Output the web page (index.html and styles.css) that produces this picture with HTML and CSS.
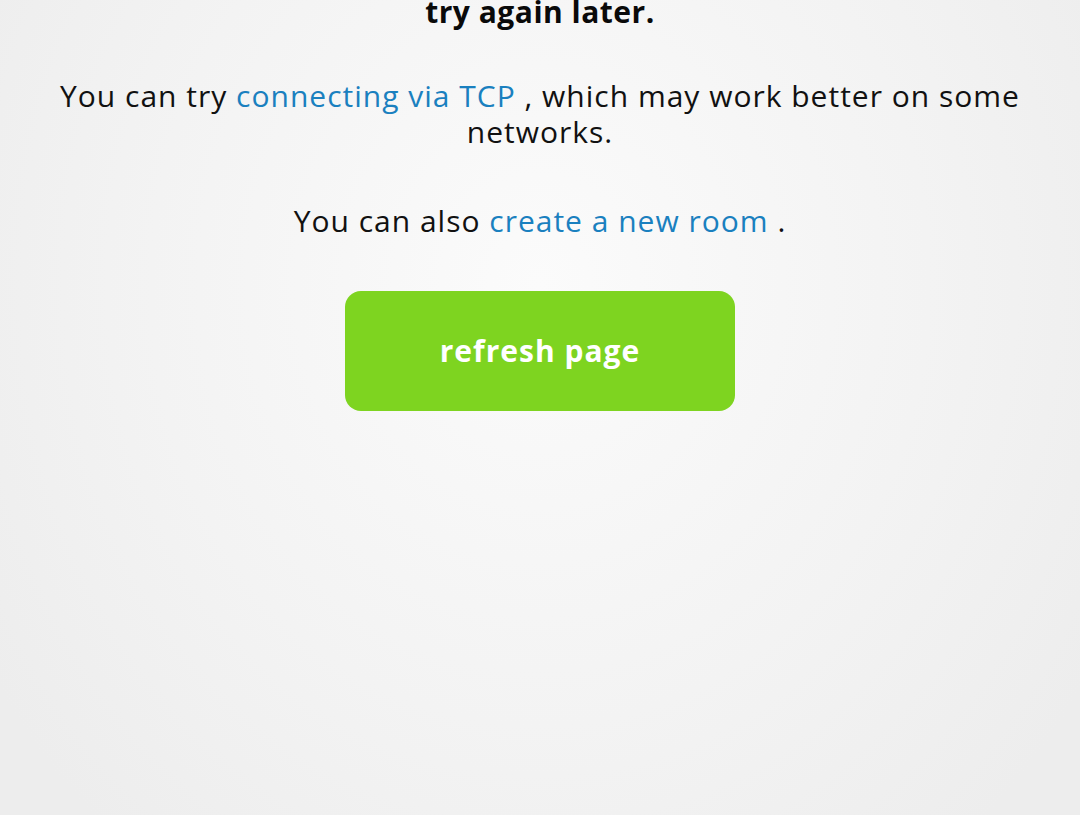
FILE: index.html
```html
<!DOCTYPE html>
<html lang="en">
<head>
<meta charset="utf-8">
<title>Connection problem</title>
<link rel="stylesheet" href="styles.css">
</head>
<body>
<main class="page">
  <p class="lead">We are having trouble reaching the server, please<br>try again later.</p>
  <p class="text">You can try <a class="link" href="#">connecting via TCP</a> , which may work better on some networks.</p>
  <p class="text text-also">You can also <a class="link" href="#">create a new room</a> .</p>
  <button class="refresh" type="button">refresh page</button>
</main>
</body>
</html>
```
FILE: styles.css
```css
html, body {
  margin: 0;
  padding: 0;
  height: 100%;
}

body {
  background: radial-gradient(ellipse 60% 90% at 50% 35%, #fbfbfb 0%, #f3f3f3 60%, #ededed 100%);
  font-family: "Open Sans", "DejaVu Sans", sans-serif;
  color: #111111;
  overflow: hidden;
}

.page {
  display: flex;
  flex-direction: column;
  align-items: center;
  text-align: center;
  padding: 0 40px;
  margin-top: -42px;
}

.lead {
  margin: 0;
  font-size: 30px;
  font-weight: 700;
  letter-spacing: 0.5px;
  line-height: 36px;
  color: #0a0a0a;
}

.text {
  margin: 48px 0 0;
  font-size: 30px;
  letter-spacing: 1px;
  line-height: 36px;
  font-weight: 400;
}

.text-also {
  margin-top: 53px;
}

.link {
  color: #1a80bf;
  text-decoration: none;
}

.refresh {
  margin-top: 52px;
  width: 390px;
  height: 120px;
  border: none;
  border-radius: 16px;
  background: #7ed420;
  color: #ffffff;
  font-family: "Open Sans", "DejaVu Sans", sans-serif;
  font-size: 30px;
  letter-spacing: 1px;
  font-weight: 700;
  padding: 0 0 2px;
  cursor: pointer;
}
```
